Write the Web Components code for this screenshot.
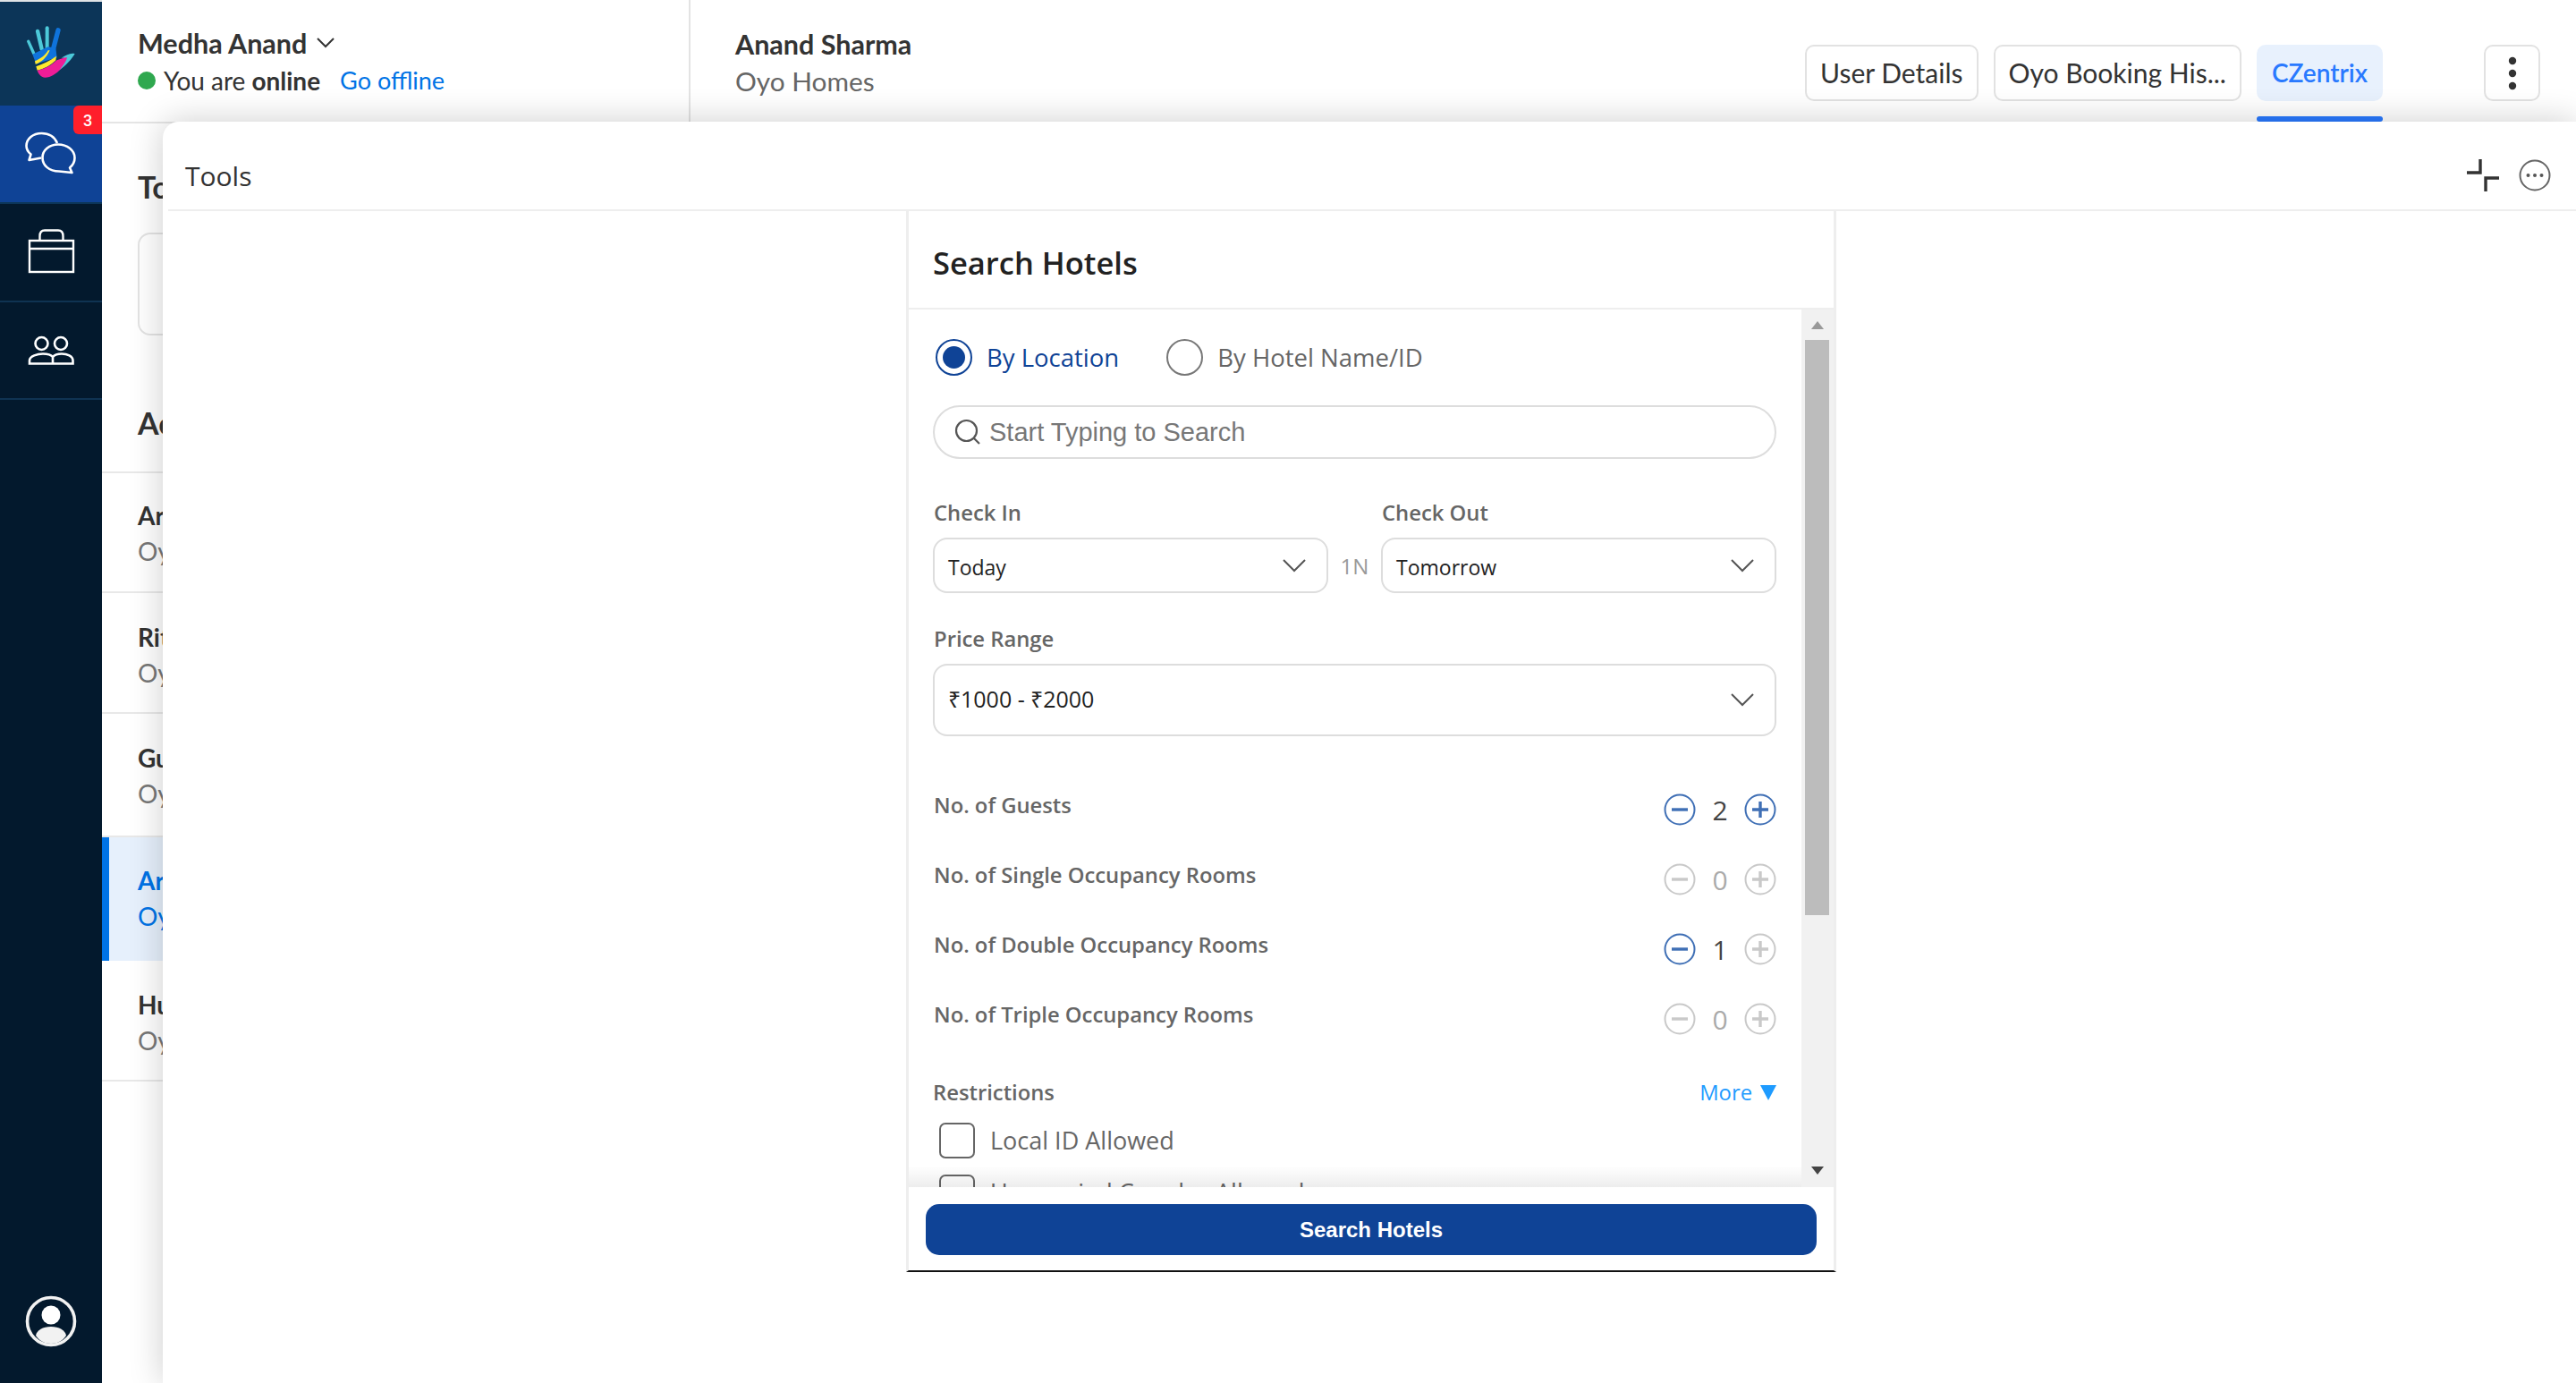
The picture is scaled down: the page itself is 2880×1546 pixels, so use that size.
<!DOCTYPE html>
<html>
<head>
<meta charset="utf-8">
<title>Tools</title>
<style>
html,body{margin:0;height:100%;overflow:hidden;background:#fff}
body{font-family:"Lato","Liberation Sans",sans-serif;color:#333}
</style>
</head>
<body>
<desk-app>
  <side-rail slot="rail">
    <rail-item tall>
      <svg viewBox="80 85 180 185" width="60" height="62" style="margin-top:-4px">
        <g fill="none" stroke="#4cc9d9" stroke-linecap="round">
          <path d="M94 142L112 182" stroke-width="10"/>
          <path d="M125 108L139 168" stroke-width="13"/>
          <path d="M157 97L157 165" stroke-width="12"/>
        </g>
        <path d="M194 105L177 170" fill="none" stroke="#0f73dc" stroke-width="16" stroke-linecap="round"/>
        <path d="M108 186L160 160L186 165L190 196L120 218Z" fill="#0f73dc"/>
        <path d="M116 208C135 200 150 190 160 172L166 172C156 196 138 212 118 219Z" fill="#ffe92e"/>
        <path d="M120 226C145 218 165 208 188 192L186 206C165 226 145 234 124 240Z" fill="#ffe92e"/>
        <path d="M124 240C150 234 172 222 188 206L212 198C230 184 236 184 236 188C225 212 190 262 150 264C138 264 128 252 124 240Z" fill="#ef1d97"/>
        <path d="M205 198C222 188 236 180 250 184C240 200 222 222 196 240C212 224 222 206 224 196Z" fill="#4cc9d9"/>
      </svg>
    </rail-item>
    <rail-item active>
      <svg viewBox="0 0 114 108" width="114" height="108" fill="none" stroke="#fff" stroke-width="2.6" stroke-linejoin="round">
        <path d="M64 42C61 35 55 31 46.5 31C37 31 29.5 37 29.5 45C29.5 49 31.5 52 34.5 54.5L32.5 61L46 58.5"/>
        <path d="M47.5 58C47.5 50 55 43.5 65 43.5C75 43.5 83.5 50 83.5 58.5C83.5 63 81 67 78 69.5L80.5 75L66 73.5C55 73.5 47.5 67 47.5 58Z"/>
      </svg>
      <span slot="badge">3</span>
    </rail-item>
    <rail-item>
      <svg viewBox="0 0 114 108" width="114" height="108" fill="none" stroke="#fff" stroke-width="2.4">
        <rect x="33" y="41" width="49" height="35"/>
        <path d="M33 50H82M44.5 41V36C44.5 31 47 29.5 50 29.5H65C68 29.5 70.5 31 70.5 36V41"/>
      </svg>
    </rail-item>
    <rail-item style="height:107px">
      <svg viewBox="0 0 114 108" width="114" height="108" fill="none" stroke="#fff" stroke-width="2.6">
        <circle cx="46.5" cy="46" r="7"/>
        <circle cx="68" cy="46" r="7"/>
        <path d="M33 68.5V65C33 60 42 57.5 48 57.5C53 57.5 57 58.5 59 61C61 58.5 65 57.5 69 57.5C75 57.5 81.5 60 81.5 65V68.5ZM59 61V68.5"/>
      </svg>
    </rail-item>
    <svg slot="foot" viewBox="0 0 60 60" width="60" height="60" fill="none" stroke="#f2f2f2" stroke-width="3.6">
      <circle cx="30" cy="30" r="26.5"/>
      <circle cx="30" cy="23" r="10.5" fill="#fff" stroke="none"/>
      <path d="M13 46C14 40 21 36 30 36C39 36 46 40 47 46C43 52 37 55 30 55C23 55 17 52 13 46Z" fill="#f2f2f2" stroke="none"/>
    </svg>
  </side-rail>

  <top-bar slot="top">
    <agent-status slot="agent"></agent-status>
    <span slot="name">Anand Sharma</span>
    <span slot="sub">Oyo Homes</span>
    <chat-tab slot="tabs">User Details</chat-tab>
    <chat-tab slot="tabs">Oyo Booking His...</chat-tab>
    <chat-tab slot="tabs" active>CZentrix</chat-tab>
  </top-bar>

  <chat-list slot="list">
    <chat-row style="padding-top:28px"><span>Ar</span><span slot="sub">Oy</span></chat-row>
    <chat-row style="height:135px"><span>Rit</span><span slot="sub">Oy</span></chat-row>
    <chat-row style="height:138px"><span>Gu</span><span slot="sub">Oy</span></chat-row>
    <chat-row active><span>Ar</span><span slot="sub">Oy</span></chat-row>
    <chat-row style="height:135px"><span>Hu</span><span slot="sub">Oy</span></chat-row>
  </chat-list>

  <tools-panel slot="over">
    <hotel-search>
      <radio-opt on>By Location</radio-opt>
      <radio-opt>By Hotel Name/ID</radio-opt>
      <pick-box slot="checkin" label="Check In" h="62">Today</pick-box>
      <pick-box slot="checkout" label="Check Out" h="62">Tomorrow</pick-box>
      <pick-box slot="price" label="Price Range" h="81" wide>₹1000 - ₹2000</pick-box>
      <count-row slot="rows" value="2" minus plus>No. of Guests</count-row>
      <count-row slot="rows" value="0">No. of Single Occupancy Rooms</count-row>
      <count-row slot="rows" value="1" minus>No. of Double Occupancy Rooms</count-row>
      <count-row slot="rows" value="0">No. of Triple Occupancy Rooms</count-row>
      <check-opt slot="checks">Local ID Allowed</check-opt>
      <check-opt slot="checks">Unmarried Couples Allowed</check-opt>
    </hotel-search>
  </tools-panel>
</desk-app>

<script>
// little helper, every element is just a template in an open shadow root
function make(name, html, setup) {
  const t = document.createElement("template")
  t.innerHTML = html
  customElements.define(name, class extends HTMLElement {
    constructor() {
      super()
      this.attachShadow({mode:"open"}).append(t.content.cloneNode(true))
    }
    connectedCallback() {
      if (setup) setup(this, this.shadowRoot)
    }
  })
}

make("desk-app", `
<style>
:host{display:grid;grid-template-columns:114px 1fr;grid-template-rows:138px 1fr;height:100vh;position:relative;overflow:hidden}
.rail{grid-row:1 / 3;display:flex}
.over{position:absolute;left:182px;right:0;top:136px;bottom:0;display:flex}
</style>
<div class="rail"><slot name="rail"></slot></div>
<slot name="top"></slot>
<slot name="list"></slot>
<div class="over"><slot name="over"></slot></div>
`)

make("side-rail", `
<style>
:host{display:flex;flex-direction:column;width:114px;background:#03192d;border-top:2px solid #dfe3e6;box-sizing:border-box;height:100%}
.foot{margin-top:auto;height:99px;display:flex;justify-content:center}
</style>
<slot></slot>
<div class="foot"><slot name="foot"></slot></div>
`)

make("rail-item", `
<style>
:host{display:flex;align-items:center;justify-content:center;height:108px;position:relative;border-bottom:2px solid #0f3352;color:#fff}
:host([tall]){height:116px;background:#0c3558;border-bottom:0}
:host([active]){background:#0f4396;border-bottom-color:#0c3558}
.b{position:absolute;right:0;top:0;width:32px;height:32px}
::slotted([slot=badge]){display:flex;align-items:center;justify-content:center;width:32px;height:32px;background:#ff1f2b;border-radius:6px 0 0 6px;font:500 18px Roboto,sans-serif;color:#fff}
</style>
<slot></slot>
<div class="b"><slot name="badge"></slot></div>
`)

make("top-bar", `
<style>
:host{display:flex;height:138px;box-sizing:border-box;border-bottom:2px solid #e5e5e5}
.me{width:658px;flex:none;box-sizing:border-box;border-right:2px solid #e3e3e3;padding-left:40px}
.who{padding:32px 0 0 50px;flex:1;display:flex;flex-direction:column;gap:8px}
.name{font-size:30.5px;font-weight:700;line-height:34px;color:#333}
.sub{font-size:29.8px;line-height:34px;color:#666}
.tabs{display:flex;gap:17px;padding:50px 40px 0 0;align-items:flex-start}
.more{width:63px;height:63px;margin-left:96px;box-sizing:border-box;border:2px solid #e2e2e2;border-radius:10px;display:flex;align-items:center;justify-content:center}
</style>
<div class="me"><slot name="agent"></slot></div>
<div class="who">
  <div class="name"><slot name="name"></slot></div>
  <div class="sub"><slot name="sub"></slot></div>
</div>
<div class="tabs">
  <slot name="tabs"></slot>
  <div class="more">
    <svg width="10" height="38" viewBox="0 0 10 38" fill="#333"><circle cx="5" cy="5" r="4.2"/><circle cx="5" cy="19" r="4.2"/><circle cx="5" cy="33" r="4.2"/></svg>
  </div>
</div>
`)

make("agent-status", `
<style>
:host{display:block;padding-top:31px}
.n{font-size:30.5px;font-weight:700;line-height:34px;display:flex;align-items:center;gap:11px;color:#333}
.s{display:flex;align-items:center;font-size:28px;line-height:34px;margin-top:8px;color:#333}
.dot{width:20px;height:20px;border-radius:50%;background:#2fa84f;margin-right:9px}
b{margin-left:7px;font-weight:700}
a{color:#0073e6;margin-left:22px;font-size:27px}
</style>
<div class="n">Medha Anand
<svg width="20" height="12" viewBox="0 0 20 12" fill="none" stroke="#333" stroke-width="2"><path d="M1 1L10 10L19 1"/></svg></div>
<div class="s"><span class="dot"></span>You are <b>online</b><a>Go offline</a></div>
`)

make("chat-tab", `
<style>
:host{display:block;position:relative;height:63px;box-sizing:border-box;border:2px solid #e2e2e2;border-radius:10px;padding:0 15px;font-size:30px;line-height:59px;color:#333;white-space:nowrap}
:host([active]){background:#e8f1fd;border-color:#e8f1fd;color:#2979ff;font-weight:600;font-size:28px}
.u{display:none;position:absolute;left:-2px;right:-2px;top:78px;height:6px;background:#2979ff;border-radius:3px}
:host([active]) .u{display:block}
</style>
<slot></slot><div class="u"></div>
`)

make("chat-list", `
<style>
:host{display:block;width:656px}
.h{font-size:34px;font-weight:700;padding-left:40px;line-height:40px;color:#333}
.box{height:115px;margin:31px 0 0 40px;box-sizing:border-box;border:2px solid #e3e3e3;border-radius:14px}
</style>
<div class="h" style="padding-top:51px">To</div>
<div class="box"></div>
<div class="h" style="padding-top:78px;padding-bottom:34px;border-bottom:2px solid #e8e8e8">Ac</div>
<slot></slot>
`)

make("chat-row", `
<style>
:host{display:block;height:134px;box-sizing:border-box;padding:30px 0 0 40px;border-bottom:2px solid #e8e8e8;font-size:28px;line-height:38px;font-weight:700;color:#333}
:host([active]){border-left:8px solid #0073e6;padding-left:32px;padding-top:29px;background:#e6f0fc;color:#0073e6;border-bottom:0;height:138px}
.s{font-weight:400;color:#777;margin-top:2px}
:host([active]) .s{color:#0073e6}
</style>
<div><slot></slot></div>
<div class="s"><slot name="sub"></slot></div>
`)

make("tools-panel", `
<style>
:host{display:flex;flex-direction:column;flex:1;background:#fff;border-radius:18px 0 0 0;box-shadow:0 0 38px rgba(0,0,0,.2);min-width:0}
.head{height:98px;flex:none;box-sizing:content-box;display:flex;align-items:center;justify-content:space-between;margin-left:6px;padding:0 28px 0 19px;border-bottom:2px solid #eee;font:30px "Open Sans",sans-serif;color:#333}
.tx{padding-top:22px}
.ic{display:flex;gap:22px;align-items:center;padding-top:22px}
.body{display:flex;justify-content:center;padding-left:4px}
</style>
<div class="head"><span class="tx">Tools</span>
  <div class="ic">
    <svg width="36" height="36" viewBox="0 0 36 36" fill="none" stroke="#333" stroke-width="3.4"><path d="M0 15H15V0M36 21H21V36"/></svg>
    <svg width="36" height="36" viewBox="0 0 36 36"><circle cx="18" cy="18" r="16.5" fill="none" stroke="#666" stroke-width="2"/><g fill="#555"><circle cx="10.5" cy="18" r="2"/><circle cx="18" cy="18" r="2"/><circle cx="25.5" cy="18" r="2"/></g></svg>
  </div>
</div>
<div class="body"><slot></slot></div>
`)

make("hotel-search", `
<style>
:host{display:flex;flex-direction:column;width:1040px;height:1186px;box-sizing:border-box;border-left:3px solid #eee;border-right:3px solid #eee;border-bottom:2px solid #111;font-family:"Open Sans",sans-serif}
.title{height:110px;flex:none;box-sizing:border-box;border-bottom:2px solid #eee;padding-left:27px;font-size:34.5px;line-height:116px;font-weight:600;color:#222}
.mid{display:flex;height:981px;flex:none;position:relative}
.fade{position:absolute;left:0;right:36px;bottom:0;height:24px;background:linear-gradient(rgba(0,0,0,0),rgba(0,0,0,.07))}
.scroll{flex:1;min-width:0;overflow:hidden;padding:33px 28px 0 27px}
.radios{display:flex;gap:50px}
.find{display:flex;align-items:center;gap:9px;height:60px;margin-top:33px;box-sizing:border-box;border:2px solid #ddd;border-radius:30px;padding-left:22px;font:29px "Liberation Sans",sans-serif;color:#777}
.dates{display:flex;margin-top:45px}
.dates ::slotted(*){flex:1}
.nights{width:59px;flex:none;padding-top:42px;text-align:center;font-size:24px;color:#999;line-height:66px;box-sizing:border-box}
.price{margin-top:33px}
.rows{margin-top:43px}
.rest{display:flex;justify-content:space-between;margin-top:28px;font-size:23.8px;font-weight:550;line-height:30px;color:#666}
.rest a{color:#1e9bff;display:flex;align-items:center;gap:9px;font-weight:500}
.rest a i{width:0;height:0;border:9.5px solid transparent;border-top:17px solid #1e9bff;border-bottom:0}
.checks{margin-top:18px}
.bar{width:36px;flex:none;background:#f1f1f1;display:flex;flex-direction:column;align-items:center}
.ar{height:34px;flex:none;display:flex;align-items:center;justify-content:center}
.ar i{width:0;height:0;border:7px solid transparent;border-top:0;border-bottom:9px solid #999}
.ar.d{margin-top:auto;height:38px}
.ar.d i{border-bottom:0;border-top:9px solid #444}
.th{width:27px;height:643px;background:#bcbcbc;margin-right:1px}
.foot{height:93px;flex:none;box-sizing:border-box;padding:19px 19px 0;background:#fff}
.go{height:57px;background:#0f4396;border-radius:15px;color:#fff;text-align:center;font:bold 24px/57px "Liberation Sans",sans-serif}
</style>
<div class="title">Search Hotels</div>
<div class="mid">
  <div class="scroll">
    <div class="radios"><slot></slot></div>
    <div class="find">
      <svg width="30" height="30" viewBox="0 0 30 30" fill="none" stroke="#555" stroke-width="2.2"><circle cx="13.5" cy="13.5" r="11.5"/><path d="M22 22L28 28"/></svg>
      Start Typing to Search
    </div>
    <div class="dates">
      <slot name="checkin"></slot>
      <div class="nights">1N</div>
      <slot name="checkout"></slot>
    </div>
    <div class="price"><slot name="price"></slot></div>
    <div class="rows"><slot name="rows"></slot></div>
    <div class="rest"><span>Restrictions</span><a>More <i></i></a></div>
    <div class="checks"><slot name="checks"></slot></div>
  </div>
  <div class="fade"></div>
  <div class="bar">
    <div class="ar"><i></i></div>
    <div class="th"></div>
    <div class="ar d"><i></i></div>
  </div>
</div>
<div class="foot"><div class="go">Search Hotels</div></div>
`)

make("radio-opt", `
<style>
:host{display:flex;align-items:center;gap:16px;font-size:27.5px;line-height:41px;color:#666;margin-left:3px}
.c{width:41px;height:41px;box-sizing:border-box;border:2px solid #777;border-radius:50%;display:flex;align-items:center;justify-content:center}
:host([on]){color:#0f4396}
:host([on]) .c{border-color:#0f4396}
:host([on]) .c::after{content:"";width:25px;height:25px;border-radius:50%;background:#0f4396}
</style>
<div class="c"></div><slot></slot>
`)

make("pick-box", `
<style>
:host{display:block;min-width:0}
.l{font-size:23.8px;font-weight:550;line-height:30px;color:#666;padding-left:1px}
.b{margin-top:13px;box-sizing:border-box;border:2px solid #ddd;border-radius:16px;display:flex;align-items:center;justify-content:space-between;padding:0 23px 0 15px;font-size:23px;color:#222}
.b span{padding-top:4px}
:host([wide]) .b{font-size:25px}
:host([wide]) .b span{padding-top:0;margin-bottom:4px}
</style>
<div class="l"></div>
<div class="b"><span><slot></slot></span>
<svg width="26" height="15" viewBox="0 0 26 15" fill="none" stroke="#555" stroke-width="2"><path d="M1 1L13 13L25 1"/></svg></div>
`, (el, sh) => {
  sh.querySelector(".l").textContent = el.getAttribute("label")
  sh.querySelector(".b").style.height = el.getAttribute("h") + "px"
})

const circ = (on, plus) => {
  const c = on ? "#3f6fb5" : "#c9c9c9"
  return `<svg width="36" height="36" viewBox="0 0 36 36" fill="none" stroke="${c}" stroke-width="2"><circle cx="18" cy="18" r="16.5"/><path d="M9 18H27${plus ? "M18 9V27" : ""}" stroke-width="3.4"/></svg>`
}

make("count-row", `
<style>
:host{display:flex;align-items:center;justify-content:space-between;height:78px;color:#666;font-size:23.8px;font-weight:550}
.t{padding:0 0 10px 1px}
.s{display:flex;align-items:center}
.v{width:54px;text-align:center;font-size:30px;font-weight:400;color:#444}
</style>
<div class="t"><slot></slot></div>
<div class="s"></div>
`, (el, sh) => {
  const v = el.getAttribute("value")
  sh.querySelector(".s").innerHTML = circ(el.hasAttribute("minus"), false) +
    `<span class="v"${v == "0" ? ' style="color:#aaa"' : ""}>${v}</span>` + circ(el.hasAttribute("plus"), true)
})

make("check-opt", `
<style>
:host{display:flex;align-items:center;gap:17px;height:41px;margin:0 0 17px 7px;font-size:27px;color:#666}
.c{width:40px;height:40px;box-sizing:border-box;border:2px solid #666;border-radius:7px;flex:none}
</style>
<div class="c"></div><slot></slot>
`)
</script>
</body>
</html>
